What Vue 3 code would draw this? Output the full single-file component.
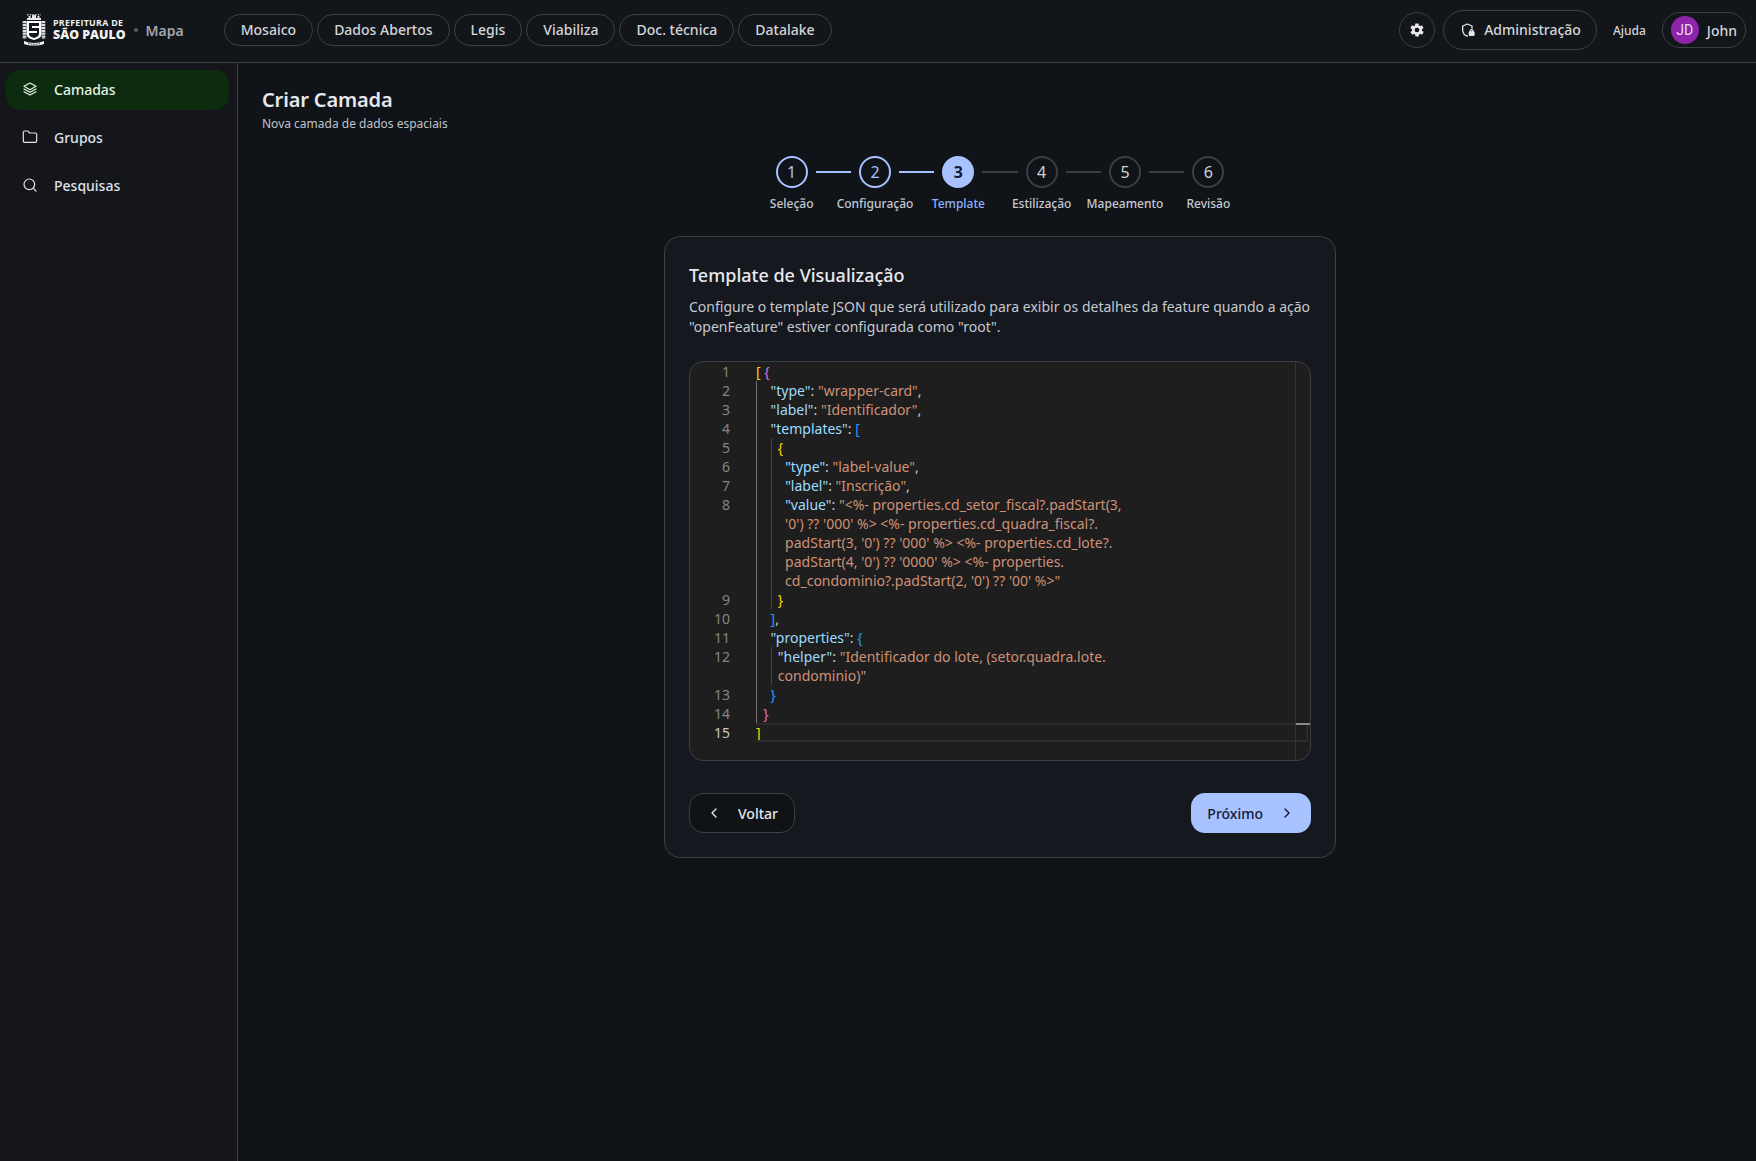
<template>
  <div class="app">
    <header class="topbar">
      <div class="brand">
        <svg class="crest" viewBox="0 0 24 32" width="24" height="32">
          <!-- crown -->
          <path d="M5 4h1.600V2h2v2h1.400V1h4v3h1.400V2h2v2H19v2H5z" fill="#e8e8e8" />
          <path d="M5 .8h14" stroke="#bdbdbd" stroke-width="1.400" stroke-dasharray="1.500 1.200" />
          <!-- branches -->
          <path d="M2.500 7v18" stroke="#e0e0e0" stroke-width="3.600" stroke-dasharray="2.200 .7" />
          <path d="M21.500 7v18" stroke="#e0e0e0" stroke-width="3.600" stroke-dasharray="2.200 .7" />
          <!-- shield -->
          <path d="M4.500 7h15v13c0 3-3 5-7.500 6-4.500-1-7.500-3-7.500-6z" fill="#fff" />
          <path d="M7 9h10v3H10v2h7v6c0 2-2 3-5 4-3-1-5-2-5-4v-1h8v-2H7z" fill="#14181c" />
          <!-- ribbon -->
          <path d="M2 27c3 1 6 2 10 2s7-1 10-2v3c-3 1-6 1.500-10 1.500S5 31 2 30z" fill="#f0f0f0" />
          <path d="M6 29.500c2 .5 4 .8 6 .8s4-.3 6-.8" stroke="#14181c" stroke-width=".8" fill="none" stroke-dasharray="1 .6" />
        </svg>
        <div class="brand-text">
          <span class="brand-top">PREFEITURA DE</span>
          <span class="brand-bottom">SÃO PAULO</span>
        </div>
        <span class="brand-dot"></span>
        <span class="brand-app">Mapa</span>
      </div>

      <nav class="nav-pills">
        <a v-for="item in navItems" :key="item" class="pill">{{ item }}</a>
      </nav>

      <div class="top-actions">
        <button class="gear-btn">
          <svg viewBox="0 0 24 24" width="16" height="16" fill="#e6e6e6">
            <path d="M19.400 13a7.600 7.600 0 0 0 0-2l2.100-1.600a.5.5 0 0 0 .1-.6l-2-3.500a.5.5 0 0 0-.6-.2l-2.500 1a7.300 7.300 0 0 0-1.700-1l-.4-2.600a.5.5 0 0 0-.5-.4h-4a.5.5 0 0 0-.5.4l-.4 2.600a7.300 7.300 0 0 0-1.700 1l-2.500-1a.5.5 0 0 0-.6.2l-2 3.500a.5.5 0 0 0 .1.6L4.600 11a7.600 7.600 0 0 0 0 2l-2.100 1.600a.5.5 0 0 0-.1.6l2 3.500c.1.2.4.3.6.2l2.500-1c.5.4 1.100.7 1.700 1l.4 2.600c0 .2.2.4.5.4h4c.3 0 .5-.2.5-.4l.4-2.600c.6-.3 1.200-.6 1.700-1l2.500 1c.2.1.5 0 .6-.2l2-3.500a.5.5 0 0 0-.1-.6zM12 15.500a3.500 3.500 0 1 1 0-7 3.500 3.500 0 0 1 0 7z" />
          </svg>
        </button>
        <button class="admin-btn">
          <svg viewBox="0 0 24 24" width="16" height="16" fill="none" stroke="#e6e6e6" stroke-width="2" stroke-linecap="round" stroke-linejoin="round">
            <path d="M11 21c-4-1-7-4-7-9V6l7-3 7 3v3" />
            <rect x="14" y="15" width="7" height="5" rx="1" fill="#e6e6e6" />
            <path d="M15.500 15v-1.500a2 2 0 0 1 4 0V15" />
          </svg>
          <span>Administração</span>
        </button>
        <a class="help-link">Ajuda</a>
        <div class="user-chip">
          <span class="avatar">JD</span>
          <span class="user-name">John</span>
        </div>
      </div>
    </header>

    <div class="body">
      <aside class="sidebar">
        <a class="side-item active">
          <svg class="side-icon" viewBox="0 0 24 24">
            <path d="M12 3 3 8l9 5 9-5z" />
            <path d="m3 12 9 5 9-5" />
            <path d="m3 16 9 5 9-5" />
          </svg>
          <span>Camadas</span>
        </a>
        <a class="side-item">
          <svg class="side-icon" viewBox="0 0 24 24">
            <path d="M20 20a2 2 0 0 0 2-2V8a2 2 0 0 0-2-2h-7.900a2 2 0 0 1-1.700-.9l-.8-1.200A2 2 0 0 0 7.900 3H4a2 2 0 0 0-2 2v13a2 2 0 0 0 2 2z" />
          </svg>
          <span>Grupos</span>
        </a>
        <a class="side-item">
          <svg class="side-icon" viewBox="0 0 24 24">
            <circle cx="11" cy="11" r="8" />
            <path d="m21 21-4.300-4.300" />
          </svg>
          <span>Pesquisas</span>
        </a>
      </aside>

      <main class="main">
        <h1 class="page-title">Criar Camada</h1>
        <p class="page-sub">Nova camada de dados espaciais</p>

        <div class="stepper">
          <div class="step-circles">
            <template v-for="(step, i) in steps" :key="step.label">
              <span class="circle" :class="step.state">{{ i + 1 }}</span>
              <span v-if="i < steps.length - 1" class="connector" :class="{ done: i < 2 }"></span>
            </template>
          </div>
          <div class="step-labels">
            <span v-for="step in steps" :key="step.label" class="step-label" :class="step.state">{{ step.label }}</span>
          </div>
        </div>

        <section class="card">
          <h2 class="card-title">Template de Visualização</h2>
          <p class="card-desc">
            Configure o template JSON que será utilizado para exibir os detalhes da feature quando a ação
            "openFeature" estiver configurada como "root".
          </p>

          <div class="editor">
            <div class="code">
              <div v-for="(row, i) in rows" :key="i" class="row" :class="{ current: row.n === 15 }">
                <span class="line-no">{{ row.n }}</span>
                <div class="line">
                  <span v-if="row.n === 15" class="current-box"></span>
                  <span v-if="row.guides > 0" class="guide guide-a"></span>
                  <span v-if="row.guides > 1" class="guide guide-b"></span>
                  <span v-for="(tok, j) in row.toks" :key="j" :class="tok[0]">{{ tok[1] }}</span>
                </div>
              </div>
            </div>
            <div class="overview"><span class="overview-mark"></span></div>
          </div>

          <div class="card-actions">
            <button class="btn btn-back">
              <svg viewBox="0 0 24 24" width="16" height="16"><path d="m15 18-6-6 6-6" /></svg>
              <span>Voltar</span>
            </button>
            <button class="btn btn-next">
              <span>Próximo</span>
              <svg viewBox="0 0 24 24" width="16" height="16"><path d="m9 18 6-6-6-6" /></svg>
            </button>
          </div>
        </section>
      </main>
    </div>
  </div>
</template>

<script setup>
const navItems = ['Mosaico', 'Dados Abertos', 'Legis', 'Viabiliza', 'Doc. técnica', 'Datalake']

const steps = [
  { label: 'Seleção', state: 'done' },
  { label: 'Configuração', state: 'done' },
  { label: 'Template', state: 'active' },
  { label: 'Estilização', state: 'todo' },
  { label: 'Mapeamento', state: 'todo' },
  { label: 'Revisão', state: 'todo' },
]

// token shortcuts for the json colours
const k = (t) => ['key', t]
const s = (t) => ['str', t]
const p = (t) => ['punct', t]

const rows = [
  { n: 1, guides: 0, toks: [['gold', '['], p(' '), ['orchid', '{']] },
  { n: 2, guides: 1, toks: [p('    '), k('"type"'), p(': '), s('"wrapper-card"'), p(',')] },
  { n: 3, guides: 1, toks: [p('    '), k('"label"'), p(': '), s('"Identificador"'), p(',')] },
  { n: 4, guides: 1, toks: [p('    '), k('"templates"'), p(': '), ['blue', '[']] },
  { n: 5, guides: 2, toks: [p('      '), ['gold', '{']] },
  { n: 6, guides: 2, toks: [p('        '), k('"type"'), p(': '), s('"label-value"'), p(',')] },
  { n: 7, guides: 2, toks: [p('        '), k('"label"'), p(': '), s('"Inscrição"'), p(',')] },
  { n: 8, guides: 2, toks: [p('        '), k('"value"'), p(': '), s('"<%- properties.cd_setor_fiscal?.padStart(3,')] },
  { n: '', guides: 2, toks: [s("        '0') ?? '000' %> <%- properties.cd_quadra_fiscal?.")] },
  { n: '', guides: 2, toks: [s("        padStart(3, '0') ?? '000' %> <%- properties.cd_lote?.")] },
  { n: '', guides: 2, toks: [s("        padStart(4, '0') ?? '0000' %> <%- properties.")] },
  { n: '', guides: 2, toks: [s("        cd_condominio?.padStart(2, '0') ?? '00' %>\"")] },
  { n: 9, guides: 2, toks: [p('      '), ['gold', '}']] },
  { n: 10, guides: 1, toks: [p('    '), ['blue', ']'], p(',')] },
  { n: 11, guides: 1, toks: [p('    '), k('"properties"'), p(': '), ['blue', '{']] },
  { n: 12, guides: 2, toks: [p('      '), k('"helper"'), p(': '), s('"Identificador do lote, (setor.quadra.lote.')] },
  { n: '', guides: 2, toks: [s('      condominio)"')] },
  { n: 13, guides: 1, toks: [p('    '), ['blue', '}']] },
  { n: 14, guides: 1, toks: [p('  '), ['orchid', '}']] },
  { n: 15, guides: 0, toks: [['gold', ']']] },
]
</script>

<style>
html,
body {
  margin: 0;
  background: #101419;
}
</style>

<style scoped>
.app {
  display: flex;
  flex-direction: column;
  height: 100vh;
  overflow: hidden;
  font-family: "Noto Sans", sans-serif;
  color: #e4e6ea;
  background: #101419;
}

/* top bar */
.topbar {
  display: flex;
  align-items: center;
  height: 63px;
  box-sizing: border-box;
  flex-shrink: 0;
  padding: 0 10px 2px 22px;
  background: #12161a;
  border-bottom: 1px solid #3c3f45;
}

.brand {
  display: flex;
  align-items: center;
}

.crest {
  display: block;
}

.brand-text {
  display: flex;
  flex-direction: column;
  margin-left: 7px;
  padding-top: 1px;
  font-family: "Open Sans", sans-serif;
  color: #f2f2f2;
  font-weight: 700;
  line-height: 1;
}

.brand-top {
  font-size: 8.8px;
  letter-spacing: 0.3px;
}

.brand-bottom {
  font-size: 12.4px;
  font-weight: 800;
  margin-top: 1px;
}

.brand-dot {
  width: 4px;
  height: 4px;
  border-radius: 50%;
  background: #5a5d64;
  margin: 0 8px;
}

.brand-app {
  font-size: 14px;
  font-weight: 600;
  color: #a2a4ab;
}

.nav-pills {
  display: flex;
  gap: 4px;
  margin-left: 40px;
}

.pill {
  height: 32px;
  box-sizing: border-box;
  padding: 0 16px 1px;
  display: flex;
  align-items: center;
  border: 1px solid #3c3f45;
  border-radius: 16px;
  font-size: 14px;
  font-weight: 500;
  color: #d4d5d9;
}

.top-actions {
  margin-left: auto;
  display: flex;
  align-items: center;
}

.gear-btn {
  width: 36px;
  height: 36px;
  border: 1px solid #3c3f45;
  border-radius: 50%;
  background: transparent;
  display: flex;
  align-items: center;
  justify-content: center;
  padding: 0;
}

.admin-btn {
  margin-left: 8px;
  height: 40px;
  padding: 0 15px 1px 16px;
  display: flex;
  align-items: center;
  gap: 8px;
  border: 1px solid #3c3f45;
  border-radius: 20px;
  background: transparent;
  color: #d4d5d9;
  font-family: inherit;
  font-size: 14px;
  font-weight: 500;
}

.help-link {
  margin-left: 16px;
  font-size: 12px;
  font-weight: 500;
  color: #d4d5d9;
}

.user-chip {
  margin-left: 16px;
  height: 36px;
  box-sizing: border-box;
  padding: 0 8px;
  display: flex;
  align-items: center;
  gap: 8px;
  border: 1px solid #3c3f45;
  border-radius: 18px;
}

.avatar {
  width: 28px;
  height: 28px;
  border-radius: 50%;
  background: #8e24aa;
  color: #e8d9ee;
  font-family: Roboto, sans-serif;
  font-size: 14px;
  display: flex;
  align-items: center;
  justify-content: center;
}

.user-name {
  font-size: 14px;
  font-weight: 500;
  color: #d4d5d9;
}

/* page body */
.body {
  flex: 1;
  display: flex;
  min-height: 0;
}

.sidebar {
  width: 238px;
  box-sizing: border-box;
  flex-shrink: 0;
  padding: 7px 0;
  background: #14161c;
  border-right: 1px solid #3c3f45;
  display: flex;
  flex-direction: column;
  gap: 8px;
}

.side-item {
  height: 40px;
  box-sizing: border-box;
  margin: 0 8px 0 6px;
  padding: 0 16px 2px;
  display: flex;
  align-items: center;
  gap: 16px;
  border-radius: 14px;
  font-size: 14px;
  font-weight: 500;
  color: #dfe2e8;
}

.side-item.active {
  background: #0d2b0e;
  color: #e6f2e4;
}

.side-icon {
  width: 16px;
  height: 16px;
  flex-shrink: 0;
  fill: none;
  stroke: currentColor;
  stroke-width: 1.8;
  stroke-linecap: round;
  stroke-linejoin: round;
}

.main {
  flex: 1;
  min-width: 0;
  padding: 23px 18px 0 24px;
}

.page-title {
  margin: 0;
  font-size: 20px;
  line-height: 28px;
  font-weight: 600;
  letter-spacing: -0.15px;
  color: #e4e8ee;
}

.page-sub {
  margin: 0;
  font-size: 12px;
  line-height: 20px;
  color: #bfc3cb;
}

/* stepper */
.stepper {
  margin-top: 22px;
  display: flex;
  flex-direction: column;
  align-items: center;
}

.step-circles {
  display: flex;
  align-items: center;
}

.circle {
  width: 32px;
  height: 32px;
  box-sizing: border-box;
  border-radius: 50%;
  border: 2px solid #3c3f45;
  display: flex;
  align-items: center;
  justify-content: center;
  font-size: 16px;
  color: #d0d1d5;
}

.circle.done {
  border-color: #a8c2ff;
  color: #a8c2ff;
}

.circle.active {
  border-color: #a8c2ff;
  background: #a8c2ff;
  color: #14193a;
  font-weight: 700;
}

.connector {
  width: 35.33px;
  height: 2px;
  margin: 0 8px;
  background: #3c3f45;
}

.connector.done {
  background: #a8c2ff;
}

.step-labels {
  display: flex;
  margin-top: 8px;
}

.step-label {
  width: 83.33px;
  text-align: center;
  font-size: 12px;
  line-height: 16px;
  font-weight: 500;
  white-space: nowrap;
  color: #c6c9d1;
}

.step-label.active {
  color: #8db0ff;
}

/* card */
.card {
  width: 672px;
  box-sizing: border-box;
  margin: 24px auto 0;
  padding: 24px;
  background: #15181e;
  border: 1px solid #3c3f45;
  border-radius: 16px;
}

.card-title {
  margin: 0;
  font-size: 18px;
  line-height: 28px;
  font-weight: 500;
  color: #e8eaee;
}

.card-desc {
  margin: 8px 0 0;
  font-size: 14px;
  line-height: 20px;
  color: #c6c9d1;
}

.editor {
  position: relative;
  height: 400px;
  box-sizing: border-box;
  margin-top: 24px;
  display: flex;
  background: #1e1e1e;
  border: 1px solid #3c3f45;
  border-radius: 14px;
  overflow: hidden;
}

.code {
  flex: 1;
  min-width: 0;
}

.overview {
  position: relative;
  width: 14px;
  border-left: 1px solid #333;
  flex-shrink: 0;
}

.overview-mark {
  display: block;
  height: 2px;
  margin-top: 361px;
  background: #8a8a8a;
}

.row {
  display: flex;
  height: 19px;
  line-height: 19px;
  font-size: 14px;
}

.line-no {
  width: 40px;
  flex-shrink: 0;
  text-align: right;
  color: #858585;
}

.row.current .line-no {
  color: #c6c6c6;
}

.line {
  position: relative;
  flex: 1;
  margin-left: 26px;
  white-space: pre;
}

/* current line box runs under the overview column */
.current-box {
  position: absolute;
  top: 0;
  bottom: 0;
  left: 0;
  right: -13px;
  border: 2px solid #2c2c2c;
  border-left: none;
}

.guide {
  position: absolute;
  top: 0;
  bottom: 0;
  width: 1px;
  background: #444444;
}

.guide-a {
  left: 0;
  background: #707070;
}

.guide-b {
  left: 14.5px;
}

.key {
  color: #9cdcfe;
}

.str {
  color: #ce9178;
}

.punct {
  color: #cccccc;
}

.gold {
  color: #ffd700;
}

.orchid {
  color: #da70d6;
}

.blue {
  color: #179fff;
}

/* footer buttons */
.card-actions {
  margin-top: 32px;
  display: flex;
  justify-content: space-between;
}

.btn {
  height: 40px;
  box-sizing: border-box;
  display: flex;
  align-items: center;
  border-radius: 14px;
  font-family: inherit;
  font-size: 14px;
  font-weight: 500;
}

.btn svg {
  fill: none;
  stroke: currentColor;
  stroke-width: 2;
  stroke-linecap: round;
  stroke-linejoin: round;
}

.btn-back {
  gap: 16px;
  padding: 0 16px;
  background: #0f1316;
  border: 1px solid #3c3f45;
  color: #e4e6ea;
}

.btn-next {
  gap: 16px;
  padding: 0 16px;
  background: #a8c2ff;
  border: none;
  color: #14193a;
}
</style>
